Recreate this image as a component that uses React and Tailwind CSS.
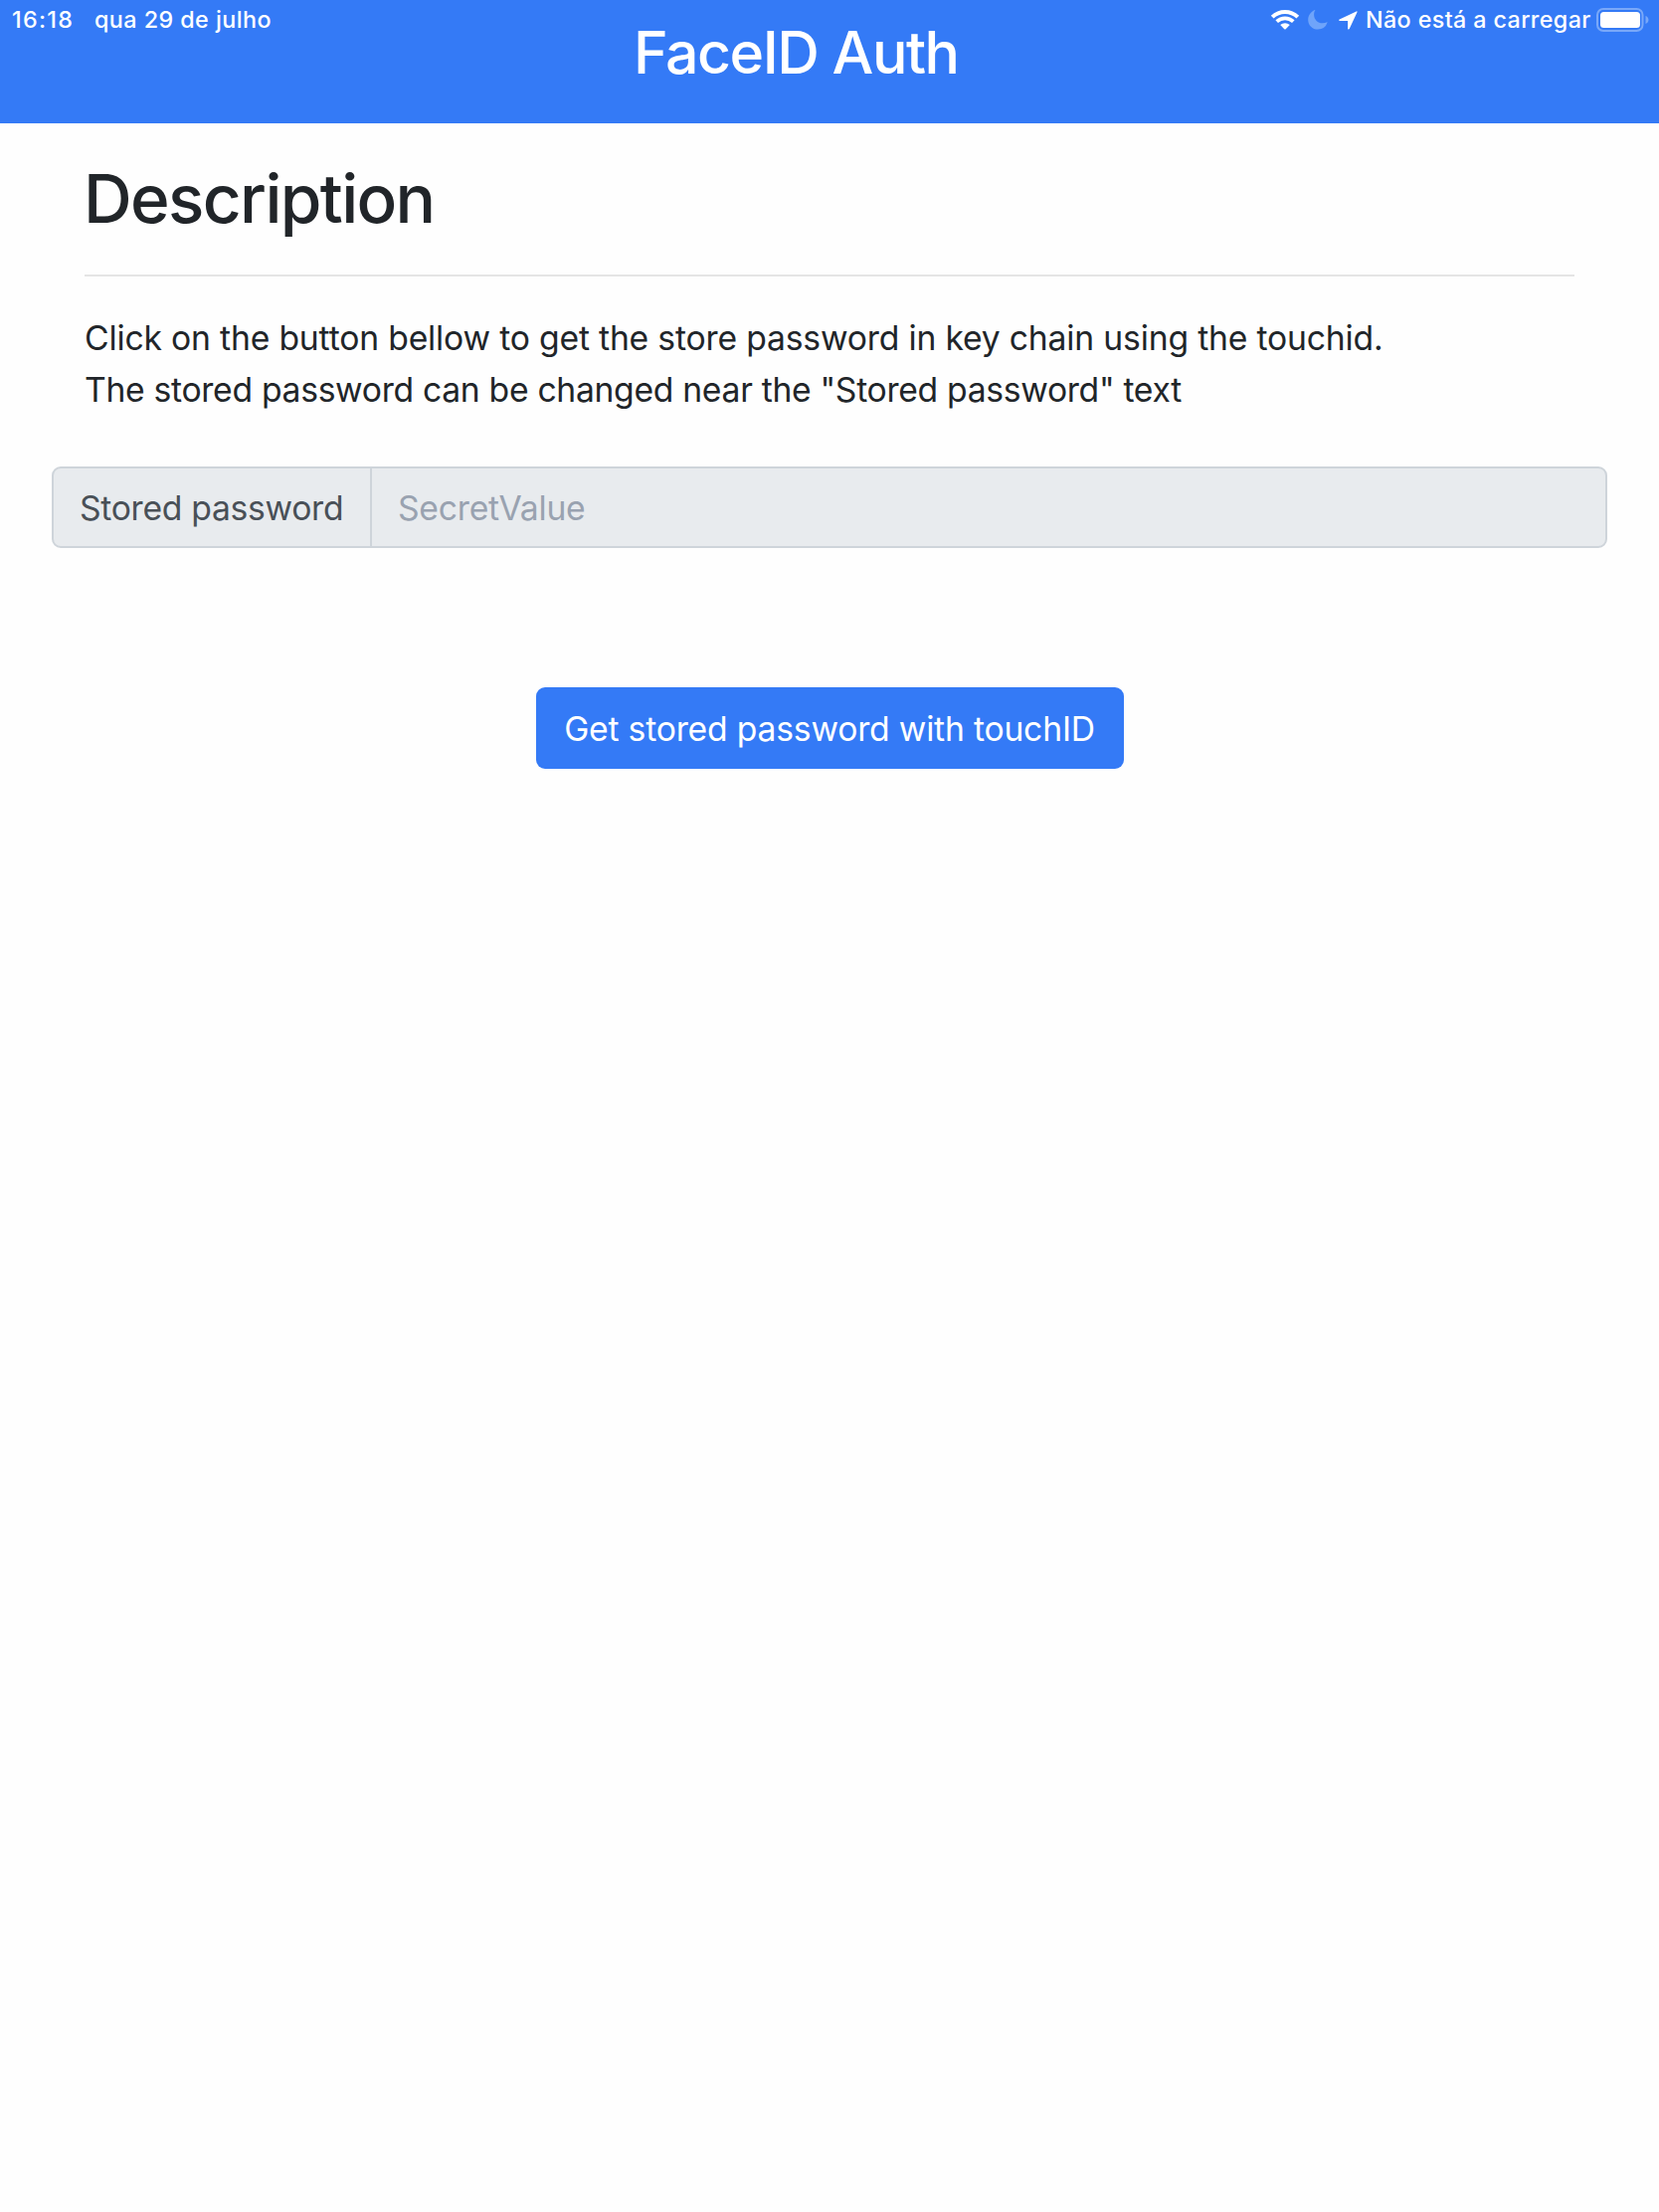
import React from "react";

function WifiIcon() {
  return (
    <svg className="block h-[22px] w-[30px]" viewBox="0 0 30 22" fill="none">
      <path d="M2.2 8.1a18.6 18.6 0 0 1 25.6 0" stroke="white" strokeWidth="4" />
      <path d="M6.7 12.7a12 12 0 0 1 16.6 0" stroke="white" strokeWidth="3.7" />
      <path d="M10.2 16.1a7 7 0 0 1 9.6 0l-4.1 4.1a1 1 0 0 1-1.4 0z" fill="white" />
    </svg>
  );
}

function MoonIcon() {
  return (
    <svg className="block h-5 w-5" viewBox="0 0 20 20">
      <path
        d="M7.3.3C6.5 1.7 6.1 3 6.1 4.7c0 4.9 3.9 8.6 8.6 8.6 1.7 0 3.2-.4 4.6-1.1.3-.1.4.1.3.4A10.2 10.2 0 0 1 10 19.6C4.5 19.6.2 15.3.2 9.9.2 5.6 3 2 6.9.1c.3-.2.6-.1.4.2z"
        fill="#6fa4fa"
      />
    </svg>
  );
}

function LocationIcon() {
  return (
    <svg className="block h-[19px] w-[19px]" viewBox="0 0 19 19">
      <path
        d="M17.7.4.7 8.5c-.8.4-.6 1.5.3 1.5h7.7c.3 0 .4.1.4.4v7.3c0 1 1.2 1.2 1.6.4L18.5 1.2c.3-.6-.2-1.1-.8-.8z"
        fill="white"
      />
    </svg>
  );
}

function BatteryIcon() {
  return (
    <svg className="block h-6 w-[53px]" viewBox="0 0 53 24">
      <rect x="1" y="1" width="45.5" height="22" rx="6" fill="none" stroke="#79a8f9" strokeWidth="2" />
      <rect x="4" y="4" width="40" height="16" rx="3.5" fill="white" />
      <path d="M49.5 8v8c1.7-.6 3-2.2 3-4s-1.3-3.4-3-4z" fill="#79a8f9" />
    </svg>
  );
}

function StatusBar() {
  return (
    <div className="absolute inset-x-0 top-0 flex h-[39px] items-center justify-between pl-[12px] pr-[10px] text-[23.3px] font-medium leading-[39px] text-white">
      <div className="flex">
        <span className="w-[83px] tracking-[1.3px]">16:18</span>
        <span className="tracking-[0.45px]">qua 29 de julho</span>
      </div>
      <div className="flex items-center">
        <WifiIcon />
        <span className="ml-[8px]"><MoonIcon /></span>
        <span className="ml-[11px] mt-[2px]"><LocationIcon /></span>
        <span className="ml-[8px] w-[232px] whitespace-nowrap tracking-[0.38px]">Não está a carregar</span>
        <BatteryIcon />
      </div>
    </div>
  );
}

export default function App() {
  return (
    <div className="relative min-h-[2224px] w-full bg-[#fefefe] font-['Inter',sans-serif] text-[33.7px] leading-[52.2px] text-[#212529]">
      <header className="h-[123.5px] bg-[#347af6] pl-[637px] text-white">
        <h1 className="text-[59px] font-medium leading-[106px] tracking-[-1.5px]">FaceID Auth</h1>
      </header>
      <StatusBar />

      <main>
        <section className="px-[85px] pt-[34px]">
          <h2 className="-ml-px text-[67.5px] font-medium leading-[84px] tracking-[-1.65px]">Description</h2>
          <hr className="mt-[34px] border-0 border-t-2 border-[#e5e5e5]" />
          <p className="mt-[36px] whitespace-nowrap">
            <span className="tracking-[-0.18px]">
              Click on the button bellow to get the store password in key chain using the touchid.
            </span>
            <br />
            <span className="tracking-[-0.31px]">
              The stored password can be changed near the "Stored password" text
            </span>
          </p>
        </section>

        <div className="mx-[52px] mt-[51px] flex h-[82px] items-center rounded-[9px] border-2 border-[#ced4da] bg-[#e8ebee]">
          <label className="flex h-full w-[320px] items-center border-r-2 border-[#ced4da] pl-[26px] pt-[3px] tracking-[-0.3px] text-[#495057]">
            Stored password
          </label>
          <span className="pl-[26px] pt-[3px] tracking-[-0.24px] text-[#99a2b0]">SecretValue</span>
        </div>

        <div className="mt-[140px] flex justify-center">
          <button className="h-[82px] w-[591px] whitespace-nowrap rounded-[9px] bg-[#347af6] pt-[2px] text-center tracking-[-0.2px] text-white">
            Get stored password with touchID
          </button>
        </div>
      </main>
    </div>
  );
}
